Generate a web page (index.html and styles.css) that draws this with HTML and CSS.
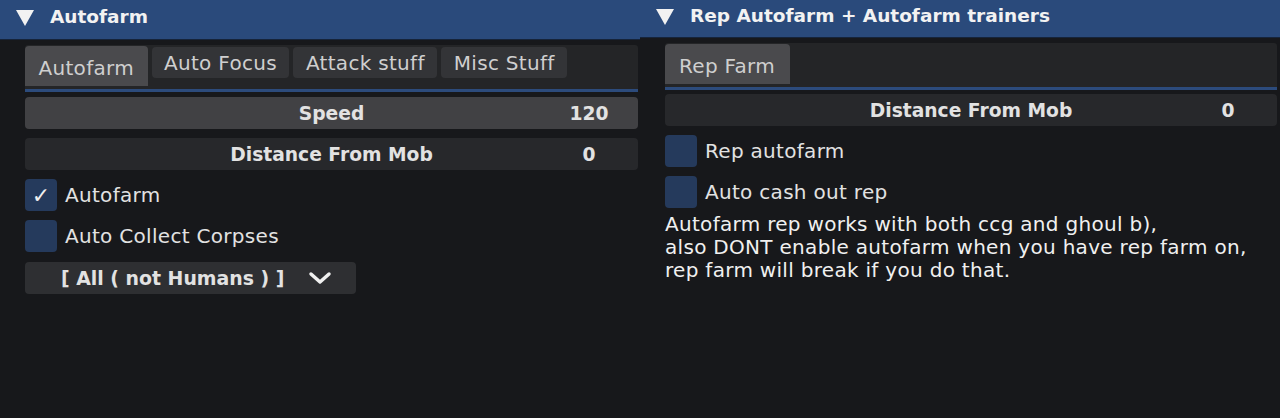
FILE: index.html
```html
<!DOCTYPE html>
<html lang="en">
<head>
  <meta charset="UTF-8">
  <title>Autofarm</title>
  <link rel="stylesheet" href="styles.css">
</head>
<body>
  <div class="panel left">
    <div class="header">
      <span class="arrow"></span>
      <span class="title">Autofarm</span>
    </div>
    <div class="content">
      <div class="tabs">
        <div class="tab active">Autofarm</div>
        <div class="tab">Auto Focus</div>
        <div class="tab">Attack stuff</div>
        <div class="tab">Misc Stuff</div>
      </div>
      <div class="items">
        <div class="slider light">
          <span class="label">Speed</span>
          <span class="value">120</span>
        </div>
        <div class="slider">
          <span class="label">Distance From Mob</span>
          <span class="value">0</span>
        </div>
        <div class="check">
          <span class="box">&#10003;</span>
          <span>Autofarm</span>
        </div>
        <div class="check">
          <span class="box"></span>
          <span>Auto Collect Corpses</span>
        </div>
        <div class="dropdown">
          <span>[ All ( not Humans ) ]</span>
          <svg width="24" height="16" viewBox="0 0 24 16"><path d="M3 4 L12 12 L21 4" fill="none" stroke="#f0f0f0" stroke-width="3.5" stroke-linecap="round" stroke-linejoin="round"/></svg>
        </div>
      </div>
    </div>
  </div>

  <div class="panel right">
    <div class="header">
      <span class="arrow"></span>
      <span class="title">Rep Autofarm + Autofarm trainers</span>
    </div>
    <div class="content">
      <div class="tabs">
        <div class="tab active">Rep Farm</div>
      </div>
      <div class="items">
        <div class="slider">
          <span class="label">Distance From Mob</span>
          <span class="value">0</span>
        </div>
        <div class="check">
          <span class="box"></span>
          <span>Rep autofarm</span>
        </div>
        <div class="check">
          <span class="box"></span>
          <span>Auto cash out rep</span>
        </div>
      </div>
      <p class="note">Autofarm rep works with both ccg and ghoul b),<br>also DONT enable autofarm when you have rep farm on,<br>rep farm will break if you do that.</p>
    </div>
  </div>
</body>
</html>
```

FILE: styles.css
```css
body {
  margin: 0;
  background-color: #17181b;
  font-family: "DejaVu Sans", sans-serif;
  font-size: 20px;
  letter-spacing: 0.3px;
  color: #e4e4e4;
  display: grid;
  grid-template-columns: 640px 640px;
  height: 418px;
  overflow: hidden;
}
.header {
  background-color: #2a4a7b;
  height: 40px;
  display: flex;
  align-items: center;
  padding-left: 16px;
  gap: 16px;
  border-bottom: 1px solid #16243a;
  box-sizing: border-box;
}
.right .header {
  height: 38px;
}
.arrow {
  width: 0;
  height: 0;
  border-left: 9px solid transparent;
  border-right: 9px solid transparent;
  border-top: 16px solid #f2f2f2;
  margin-top: -4px;
}
.title {
  font-weight: bold;
  color: #f2f2f2;
  font-size: 18.5px;
  letter-spacing: 0;
  margin-top: -6px;
}
.content {
  padding: 5px 2px 0 25px;
}
.right .content {
  padding: 5px 3px 0 25px;
}
.tabs {
  background-color: #242527;
  height: 43px;
  border-bottom: 3px solid #2c4b7c;
  display: flex;
  align-items: flex-start;
  gap: 4px;
  padding-top: 1px;
  border-radius: 3px 3px 0 0;
}
.tab {
  background-color: #333437;
  color: #cfcfcf;
  height: 31px;
  padding: 0 12.5px;
  display: flex;
  align-items: center;
  border-radius: 4px;
  margin-top: 1px;
}
.tab.active {
  background-color: #4a4a4d;
  height: 40px;
  margin-top: 0;
  padding: 4px 13.5px 0;
  box-sizing: border-box;
  border-radius: 4px 4px 0 0;
}
.right .tab.active {
  padding: 4px 15px 0 14px;
}
.items {
  display: flex;
  flex-direction: column;
  gap: 9px;
  margin-top: 5px;
}
.right .items {
  margin-top: 4px;
}
.slider {
  height: 32px;
  background-color: #27282b;
  border-radius: 4px;
  display: flex;
  align-items: center;
  position: relative;
  font-weight: bold;
  font-size: 18.7px;
  letter-spacing: 0;
  color: #e2e2e2;
}
.slider.light {
  background-color: #414144;
}
.slider .label {
  flex: 1;
  text-align: center;
}
.slider .value {
  position: absolute;
  right: 0;
  width: 98px;
  text-align: center;
}
.check {
  display: flex;
  align-items: center;
  gap: 8px;
  height: 32px;
  color: #e2e2e2;
}
.box {
  width: 32px;
  height: 32px;
  background-color: #253a5c;
  border-radius: 4px;
  display: flex;
  align-items: center;
  justify-content: center;
  color: #f0f0f0;
  font-size: 22px;
}
.dropdown {
  width: 331px;
  height: 32px;
  background-color: #2e2f32;
  border-radius: 4px;
  display: flex;
  align-items: center;
  gap: 24px;
  padding-left: 36px;
  box-sizing: border-box;
  font-weight: bold;
  font-size: 18.9px;
  letter-spacing: 0;
  color: #e2e2e2;
  margin-top: 1px;
}
.note {
  margin: 5px 0 0;
  line-height: 23px;
  color: #f0f0f0;
}
```
